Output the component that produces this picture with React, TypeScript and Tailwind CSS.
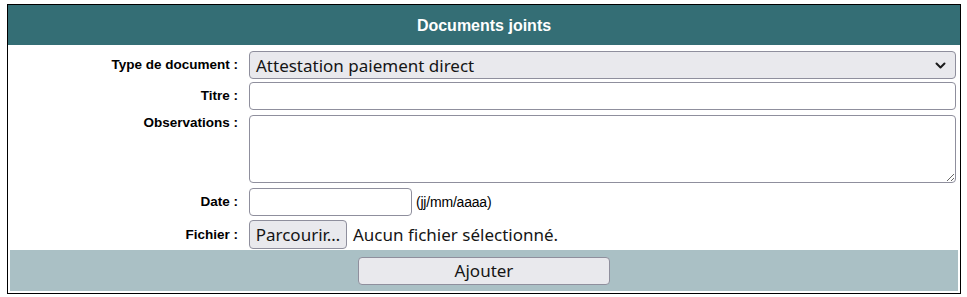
import React from 'react';

// Chevron used by the fake select box
const ChevronDown = () => (
  <svg width="11" height="7" viewBox="0 0 11 7" fill="none">
    <path d="M1.5 1.5L5.5 5.5L9.5 1.5" stroke="#1b1b1b" strokeWidth="2" strokeLinecap="round" strokeLinejoin="round" />
  </svg>
);

const labelCls =
  "text-right text-[13.5px] font-bold text-black font-['Liberation_Sans',Arial,sans-serif] leading-none";
const controlFont = "font-['Noto_Sans',Tahoma,sans-serif] text-[17px] leading-none text-[#151515]";

export default function App() {
  return (
    <div className="pl-[7px] pt-[4px] bg-white">
      <div className="w-[954px] border border-black bg-white">
        {/* Header */}
        <div className="h-[40px] bg-[#346e75] flex items-center justify-center pt-[2px]">
          <h2 className="text-white font-bold text-[16px] font-['Liberation_Sans',Arial,sans-serif]">
            Documents joints
          </h2>
        </div>

        {/* Form rows */}
        <div className="pt-[6px] pr-[4px] grid grid-cols-[230px_1fr] gap-x-[11px]">
          <div className={`${labelCls} self-center`}>Type de document :</div>
          <div className="h-[28px] rounded-[4px] border border-[#8f8f9d] bg-[#e9e9ed] flex items-center justify-between pl-[6px] pr-[9px]">
            <span className={controlFont}>Attestation paiement direct</span>
            <ChevronDown />
          </div>

          <div className={`${labelCls} self-center mt-[3px]`}>Titre :</div>
          <input
            type="text"
            className="mt-[3px] h-[28px] rounded-[4px] border border-[#8f8f9d] bg-white outline-none"
          />

          <div className={`${labelCls} mt-[6px]`}>Observations :</div>
          <textarea className="mt-[5px] h-[68px] rounded-[4px] border border-[#8f8f9d] bg-white outline-none resize-y" />

          <div className={`${labelCls} self-center mt-[5px]`}>Date :</div>
          <div className="mt-[5px] flex items-end gap-[4px]">
            <input
              type="text"
              className="w-[163px] h-[28px] rounded-[4px] border border-[#8f8f9d] bg-white outline-none"
            />
            <span className="text-[14px] text-black font-['Liberation_Sans',Arial,sans-serif] mb-[3px] tracking-[-0.2px]">
              (jj/mm/aaaa)
            </span>
          </div>

          <div className={`${labelCls} self-center mt-[4px]`}>Fichier :</div>
          <div className="mt-[4px] flex items-center gap-[6px]">
            <button className={`h-[29px] w-[98px] rounded-[4px] border border-[#8f8f9d] bg-[#e9e9ed] ${controlFont}`}>
              Parcourir…
            </button>
            <span className={controlFont}>Aucun fichier sélectionné.</span>
          </div>
        </div>

        {/* Actions */}
        <div className="mt-[1px] mx-[2px] mb-[2px] h-[41px] bg-[#aac0c5] flex items-center justify-center">
          <button
            className={`w-[252px] h-[28px] rounded-[4px] border border-[#8f8f9d] bg-[#e9e9ed] ${controlFont}`}
          >
            Ajouter
          </button>
        </div>
      </div>
    </div>
  );
}
